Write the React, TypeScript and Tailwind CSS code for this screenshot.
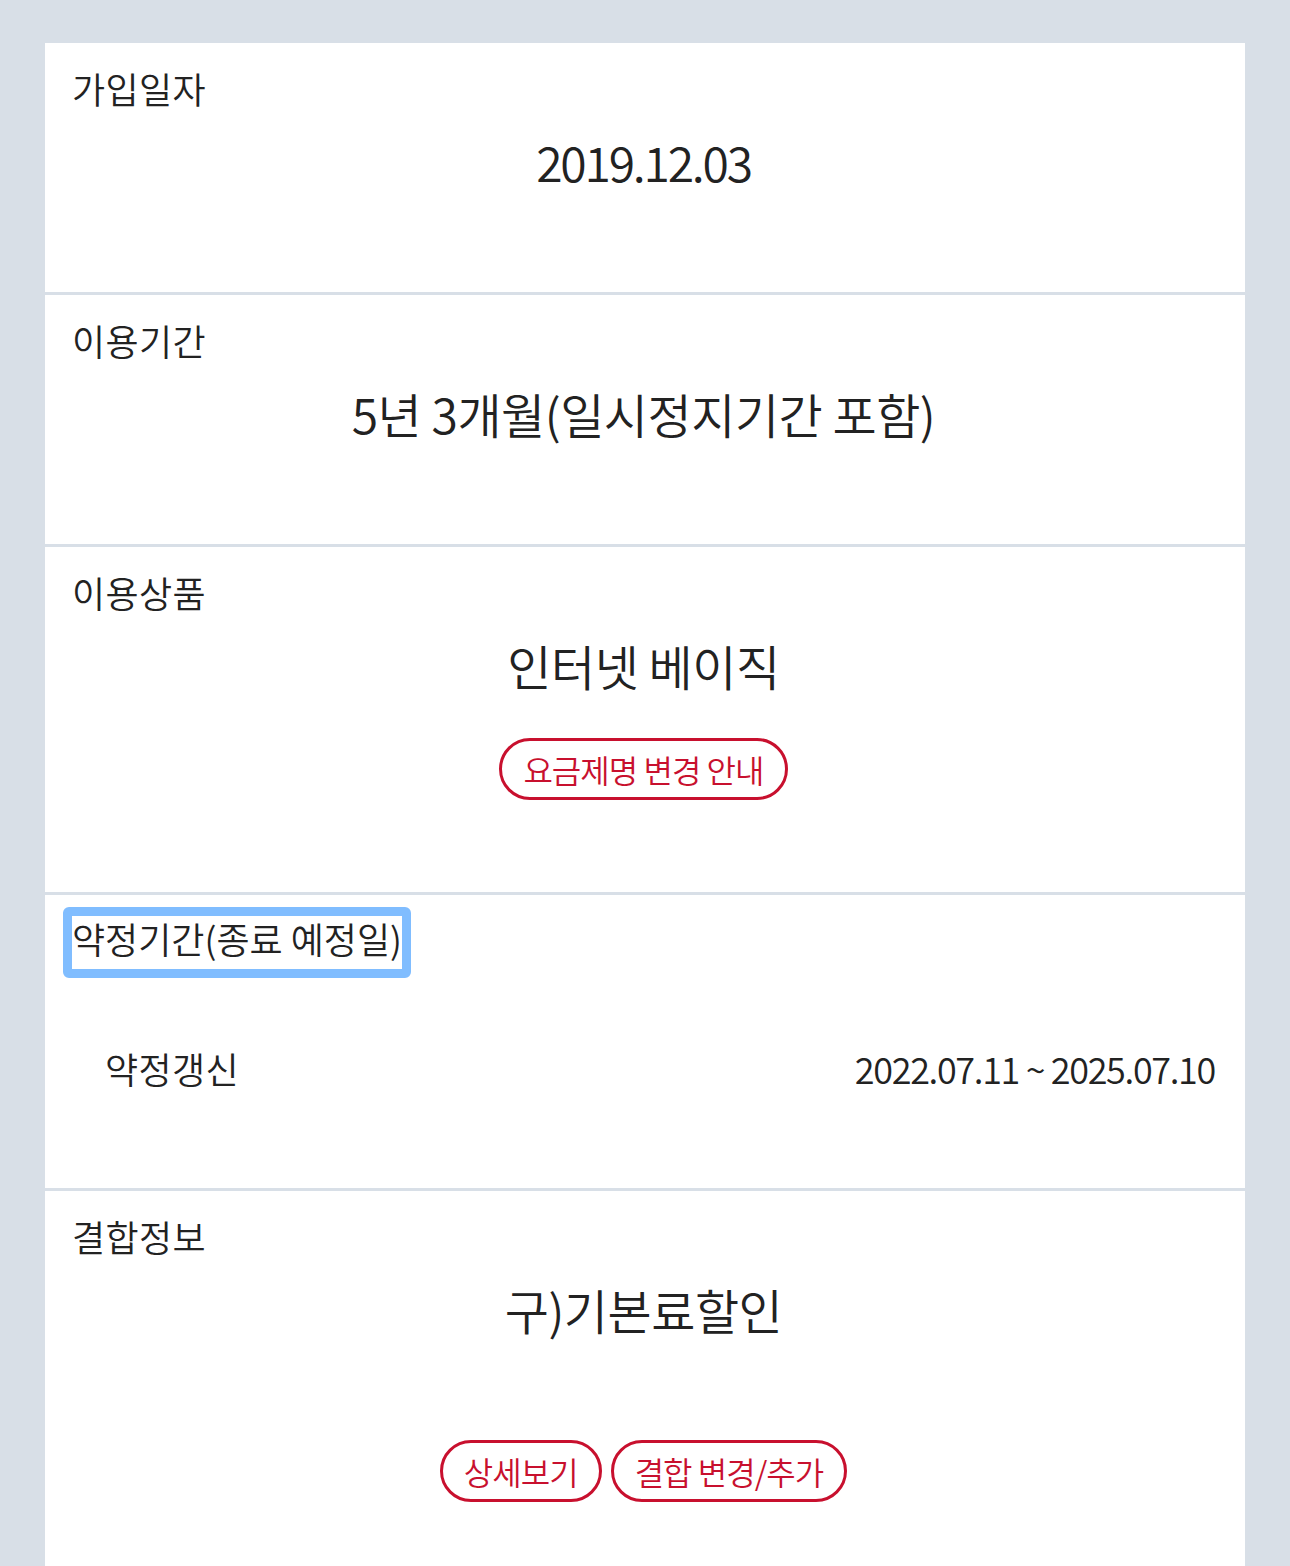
import React from 'react';

const font = { fontFamily: '"Noto Sans CJK KR", "Noto Sans", sans-serif' };

function Label({ children }: { children: React.ReactNode }) {
  return <div className="text-[36px] font-[350] leading-[44px] tracking-[0.01em] text-[#222]">{children}</div>;
}

function Value({ children }: { children: React.ReactNode }) {
  return (
    <div className="mt-[27px] text-center text-[48px] font-[350] leading-[48px] tracking-[-0.01em] text-[#222]">
      {children}
    </div>
  );
}

function PillButton({ children }: { children: React.ReactNode }) {
  return (
    <button className="h-[62px] rounded-full border-[3px] border-[#c8102e] bg-white px-[21px] text-[32px] font-[350] leading-none tracking-[-0.03em] text-[#c8102e]">
      {children}
    </button>
  );
}

export default function App() {
  return (
    <div className="min-h-[1566px] bg-[#d8dfe7] px-[45px] pt-[43px]" style={font}>
      <div className="flex flex-col gap-[3px]">
        {/* 가입일자 */}
        <section className="bg-white pl-[27px] pr-[30px] pt-[23px] pb-[107px]">
          <Label>가입일자</Label>
          <Value>
            <span className="tracking-[-0.046em]">2019.12.03</span>
          </Value>
        </section>

        {/* 이용기간 */}
        <section className="bg-white pl-[27px] pr-[30px] pt-[23px] pb-[107px]">
          <Label>이용기간</Label>
          <Value>5년 3개월(일시정지기간 포함)</Value>
        </section>

        {/* 이용상품 */}
        <section className="bg-white pl-[27px] pr-[30px] pt-[23px] pb-[92px]">
          <Label>이용상품</Label>
          <Value>인터넷 베이직</Value>
          <div className="mt-[49px] flex justify-center">
            <PillButton>요금제명 변경 안내</PillButton>
          </div>
        </section>

        {/* 약정기간 */}
        <section className="bg-white pl-[27px] pr-[30px] pt-[12px] pb-[98px]">
          <div className="flex">
            <span className="-ml-[9px] inline-block rounded-[6px] border-[9px] border-[#80bdff] pb-[9px] text-[36px] font-[350] leading-[44px] tracking-[0em] text-[#222]">
              약정기간(종료 예정일)
            </span>
          </div>
          <div className="mt-[68px] flex items-center justify-between pl-[33px] text-[36px] font-[350] leading-[44px] text-[#222]">
            <span className="tracking-[0.01em]">약정갱신</span>
            <span className="tracking-[-0.037em]">2022.07.11 ~ 2025.07.10</span>
          </div>
        </section>

        {/* 결합정보 */}
        <section className="bg-white pl-[27px] pr-[30px] pt-[23px] pb-[100px]">
          <Label>결합정보</Label>
          <Value>구)기본료할인</Value>
          <div className="mt-[107px] flex justify-center gap-[9px]">
            <PillButton>상세보기</PillButton>
            <PillButton>결합 변경/추가</PillButton>
          </div>
        </section>
      </div>
    </div>
  );
}
